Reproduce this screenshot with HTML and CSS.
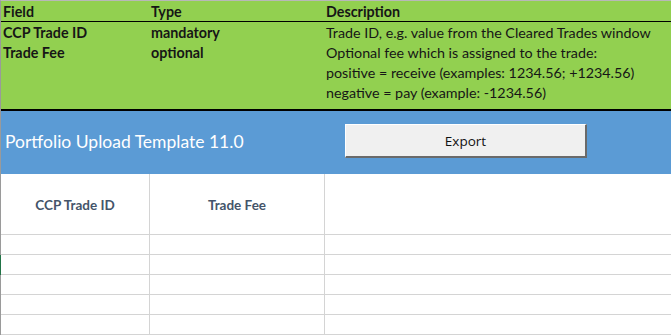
FILE: index.html
```html
<!DOCTYPE html>
<html>
<head>
<meta charset="utf-8">
<link rel="stylesheet" href="styles.css">
</head>
<body>
<div class="sheet">
  <section class="info">
    <div class="info-head">
      <div class="cell">Field</div>
      <div class="cell">Type</div>
      <div class="cell">Description</div>
    </div>
    <div class="info-body">
      <div class="cell b">CCP Trade ID</div>
      <div class="cell b">mandatory</div>
      <div class="cell">Trade ID, e.g. value from the Cleared Trades window</div>
      <div class="cell b">Trade Fee</div>
      <div class="cell b">optional</div>
      <div class="cell">Optional fee which is assigned to the trade:</div>
      <div class="cell"></div>
      <div class="cell"></div>
      <div class="cell">positive = receive (examples: 1234.56; +1234.56)</div>
      <div class="cell"></div>
      <div class="cell"></div>
      <div class="cell">negative = pay (example: -1234.56)</div>
    </div>
  </section>
  <section class="banner">
    <div class="title">Portfolio Upload Template 11.0</div>
    <button class="export">Export</button>
  </section>
  <section class="grid">
    <div class="gh">CCP Trade ID</div>
    <div class="gh">Trade Fee</div>
    <div class="gh last"></div>
    <div class="gc"></div><div class="gc"></div><div class="gc last"></div>
    <div class="gc sel"></div><div class="gc"></div><div class="gc last"></div>
    <div class="gc"></div><div class="gc"></div><div class="gc last"></div>
    <div class="gc"></div><div class="gc"></div><div class="gc last"></div>
    <div class="gc"></div><div class="gc"></div><div class="gc last"></div>
  </section>
</div>
</body>
</html>
```
FILE: styles.css
```css
html, body {
  margin: 0;
  padding: 0;
  background: #ffffff;
  overflow: hidden;
}
body {
  width: 671px;
  height: 335px;
  font-family: Lato, "Open Sans", sans-serif;
}
.sheet {
  border-left: 1px solid #9a9a9a;
  border-top: 1px solid #b8b8b8;
  height: 334px;
}
.info {
  background: #92d050;
  height: 108px;
  border-bottom: 2px solid #000;
  color: #161616;
  font-size: 14.3px;
}
.info-head, .info-body {
  display: grid;
  grid-template-columns: 148px 175px 1fr;
}
.info-head {
  height: 20px;
  border-bottom: 1px solid #000;
  font-weight: 700;
}
.info-body {
  grid-auto-rows: 20px;
}
.cell {
  padding-left: 2px;
  padding-top: 1px;
  line-height: 20px;
  white-space: nowrap;
}
.b { font-weight: 700; }
.banner {
  background: #5b9bd5;
  height: 63px;
  display: flex;
  align-items: center;
}
.title {
  color: #ffffff;
  font-size: 17.5px;
  width: 340px;
  padding-left: 4px;
  padding-bottom: 2px;
}
.export {
  margin: 0;
  margin-top: -3px;
  width: 242px;
  height: 34px;
  background: #f0f0f0;
  border-top: 1px solid #ffffff;
  border-left: 1px solid #ffffff;
  border-right: 2px solid #6a6a6a;
  border-bottom: 2px solid #6a6a6a;
  font-family: "Open Sans", Lato, sans-serif;
  font-size: 13.5px;
  color: #111;
  padding: 0;
}
.grid {
  display: grid;
  grid-template-columns: 149px 175px 1fr;
  grid-template-rows: 61px repeat(5, 20px);
}
.gh, .gc {
  border-right: 1px solid #d4d4d4;
  border-bottom: 1px solid #d4d4d4;
}
.gh {
  display: flex;
  align-items: center;
  justify-content: center;
  font-weight: 700;
  font-size: 13.5px;
  color: #44546a;
  padding-top: 2px;
}
.last { border-right: none; }
.sel { position: relative; }
.sel::before {
  content: "";
  position: absolute;
  left: -1px;
  top: 0;
  width: 1px;
  height: 20px;
  background: #217346;
}
```
